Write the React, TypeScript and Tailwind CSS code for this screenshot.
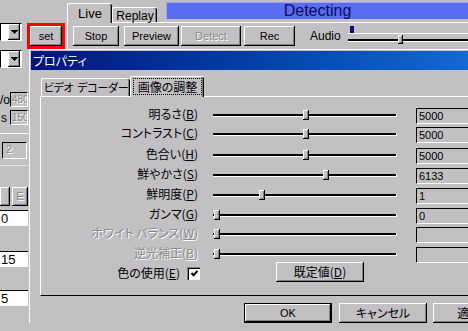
import type { ReactNode } from "react";

const BG = "bg-[#c2c0c3]";
const RAISED =
  "shadow-[inset_-1px_-1px_0_#000,inset_1px_1px_0_#fff,inset_-2px_-2px_0_#808080]";
const FIELD = "border-l border-t border-l-black border-t-black border-r border-b border-r-white border-b-white";
const JP = "font-['Noto_Sans_CJK_JP',sans-serif] [font-feature-settings:'palt']";
const DIM = "text-[#8a888c] [text-shadow:1px_1px_0_#fff]";

type Row = {
  label: string;
  hotkey: string;
  value: string;
  pos: number;
  h: string;
  disabled?: boolean;
};

const rows: Row[] = [
  { label: "明るさ", hotkey: "B", value: "5000", pos: 90, h: "h-[19px]" },
  { label: "コントラスト", hotkey: "C", value: "5000", pos: 90, h: "h-[21px]" },
  { label: "色合い", hotkey: "H", value: "5000", pos: 90, h: "h-[20px]" },
  { label: "鮮やかさ", hotkey: "S", value: "6133", pos: 110, h: "h-[20px]" },
  { label: "鮮明度", hotkey: "P", value: "1", pos: 46, h: "h-[20px]" },
  { label: "ガンマ", hotkey: "G", value: "0", pos: 1, h: "h-[19px]" },
  { label: "ホワイト バランス", hotkey: "W", value: "", pos: 1, h: "h-[20px]", disabled: true },
  { label: "逆光補正", hotkey: "B", value: "", pos: 1, h: "h-[17px]", disabled: true },
];

function Arrow() {
  return (
    <svg width="7" height="4" viewBox="0 0 7 4" shapeRendering="crispEdges">
      <path d="M0 0h7v1h-1v1h-1v1h-1v1h-1v-1h-1v-1h-1v-1h-1z" fill="#000" />
    </svg>
  );
}

function Combo() {
  return (
    <div className={`flex h-[18px] w-[22px] bg-white ${FIELD} pr-px`}>
      <div className="flex-1" />
      <div className={`flex w-[12px] items-center justify-center ${BG} ${RAISED}`}>
        <Arrow />
      </div>
    </div>
  );
}

function Btn({
  children,
  className = "",
  disabled,
}: {
  children: ReactNode;
  className?: string;
  disabled?: boolean;
}) {
  return (
    <div
      className={`flex h-[20px] shrink-0 items-center justify-center whitespace-nowrap ${BG} ${RAISED} ${
        disabled ? DIM : "text-black"
      } ${className}`}
    >
      {children}
    </div>
  );
}

function Slider({ pos }: { pos: number }) {
  return (
    <div className="relative h-[3px] w-[184px] border-b border-r border-white bg-black">
      <div
        className={`absolute top-[-4px] h-[10px] w-[6px] ${BG} ${RAISED}`}
        style={{ left: pos }}
      />
    </div>
  );
}

function LeftColumn() {
  return (
    <div className="w-[29px] shrink-0 pr-px">
      <div className="mt-px">
        <Combo />
      </div>
      <div className="mt-[24px] flex h-[15px] items-center">
        <span className="w-[10px] text-[12px]">/o</span>
        <div className={`h-[15px] flex-1 overflow-hidden pl-px text-[10px] leading-[13px] ${FIELD} ${DIM}`}>480</div>
      </div>
      <div className="mt-[3px] flex h-[15px] items-center">
        <span className="w-[10px] pl-px text-[12px]">s</span>
        <div className={`h-[15px] flex-1 overflow-hidden pl-px text-[10px] leading-[13px] ${FIELD} ${DIM}`}>150</div>
      </div>
      <div className="mt-[8px] h-px bg-white" />
      <div className={`ml-[2px] mr-px mt-[8px] h-[17px] pl-[3px] pt-px ${FIELD} ${DIM}`}>2</div>
      <div className="mt-[6px] h-px bg-[#e6e4e8]" />
      <div className="mt-[21px] flex h-[19px] gap-[2px]">
        <div className={`w-[10px] ${BG} ${RAISED}`} />
        <div className={`flex flex-1 items-center justify-center ${BG} ${RAISED} ${DIM}`}>E</div>
      </div>
      <div className="mt-[4px] h-[16px] border-t border-black bg-white pl-px text-[13px] leading-[15px]">0</div>
      <div className="mt-[25px] h-[16px] border-t border-black bg-white pl-px text-[13px] leading-[15px]">15</div>
      <div className="mt-[23px] h-[16px] border-t border-black bg-white pl-px text-[13px] leading-[15px]">5</div>
    </div>
  );
}

function PictureTab() {
  return (
    <div className="h-[199px] border-b border-l border-b-black border-l-white pt-[9px]">
      {rows.map((row) => (
        <div key={row.label} className={`flex items-start ${row.h}`}>
          <div
            className={`w-[157px] text-right text-[12px] leading-[16px] ${JP} ${
              row.disabled ? DIM : "text-black"
            }`}
          >
            {row.label}(<u>{row.hotkey}</u>)
          </div>
          <div className="ml-[15px] mt-[2px] flex h-[14px] items-center">
            <Slider pos={row.pos} />
          </div>
          <div className={`ml-[19px] mt-[2px] h-[16px] w-[60px] pl-[2px] leading-[15px] ${FIELD}`}>
            {row.value}
          </div>
        </div>
      ))}
      <div className="flex h-[20px] items-start">
        <div className="flex w-[159px] items-center justify-end gap-[7px] pt-[4px]">
          <span className={`text-[12px] leading-[14px] ${JP}`}>
            色の使用(<u>E</u>)
          </span>
          <div className="flex h-[13px] w-[13px] items-center justify-center border-l border-t border-[#808080] bg-white shadow-[inset_1px_1px_0_#000]">
            <svg width="9" height="9" viewBox="0 0 9 9">
              <path d="M1.5 4l2 2.2L7.5 1.8" fill="none" stroke="#000" strokeWidth="2" />
            </svg>
          </div>
        </div>
        <Btn className={`ml-[76px] h-[19px] w-[88px] text-[12px] ${JP}`}>
          既定値(<u>D</u>)
        </Btn>
      </div>
    </div>
  );
}

function PropertyDialog() {
  return (
    <div className="w-[480px] shrink-0 border-l border-t border-white pl-px pt-px">
      <div
        className={`flex h-[19px] items-center bg-gradient-to-r from-[#04127c] to-[#1870dc] pl-[2px] text-[12px] text-white ${JP}`}
      >
        プロパティ
      </div>
      <div className="pl-[9px]">
        <div className={`mt-[4px] flex h-[23px] items-end border-b border-white pl-px text-[12px] ${JP}`}>
          <div className="flex h-[18px] w-[89px] shrink-0 items-center justify-center whitespace-nowrap rounded-t-[2px] border-l border-t border-white text-[11px] tracking-[-0.3px] shadow-[inset_-1px_0_0_#000,inset_-2px_0_0_#808080]">
            <span>ビデオ</span>
            <span className="ml-[4px]">デコーダー</span>
          </div>
          <div className={`-mb-px flex h-[21px] w-[74px] shrink-0 items-center justify-center rounded-t-[2px] border-l border-t border-white ${BG} px-[2px] pb-[2px] pt-px shadow-[inset_-1px_0_0_#000,inset_-2px_0_0_#808080]`}>
            <span className="flex h-full w-full items-center justify-center border border-dotted border-black">
              画像の調整
            </span>
          </div>
        </div>
        <PictureTab />
        <div className="mt-[7px] flex">
          <div className="ml-[204px] flex h-[20px] w-[88px] shrink-0 border border-black">
            <Btn className="h-full w-full">OK</Btn>
          </div>
          <Btn className={`ml-[7px] w-[88px] text-[12px] ${JP}`}>キャンセル</Btn>
          <Btn className={`ml-[6px] w-[88px] text-[12px] ${JP}`}>適用(A)</Btn>
        </div>
      </div>
    </div>
  );
}

export default function App() {
  return (
    <div
      className={`h-[331px] w-[468px] overflow-hidden ${BG} font-['Liberation_Sans',sans-serif] text-[11px] leading-none text-black`}
    >
      <div className="flex h-[49px]">
        <div className="w-[27px] shrink-0 pt-[23px]">
          <Combo />
        </div>
        <div className="mt-[23px] h-[26px] w-[38px] shrink-0 border-[3px] border-[#ff0000]">
          <Btn className="h-full w-full">set</Btn>
        </div>
        <div className="ml-[2px] flex-1">
          <div className="flex h-[23px] items-end border-b border-white text-[12px]">
            <div className={`-mb-px flex h-[20px] w-[45px] items-center justify-center rounded-t-[2px] border-l border-t border-white ${BG} text-[13px] shadow-[inset_-1px_0_0_#000,inset_-2px_0_0_#808080]`}>
              Live
            </div>
            <div className="flex h-[15px] w-[45px] items-center justify-center rounded-t-[2px] border-l border-t border-white pt-px text-[12px] shadow-[inset_-1px_0_0_#000,inset_-2px_0_0_#808080]">
              Replay
            </div>
            <div className="mb-[3px] ml-[9px] flex h-[17px] flex-1 items-end justify-center overflow-hidden border-l border-t border-[#9aa6f8] bg-[#5a6cf2] text-[16px] leading-[16px] text-[#0c0c5c]">
              Detecting
            </div>
          </div>
          <div className="flex h-[26px] items-start border-l border-white pl-[5px] pt-[3px]">
            <Btn className="w-[46px]">Stop</Btn>
            <Btn className="ml-[5px] w-[55px]">Preview</Btn>
            <Btn className="ml-[2px] w-[60px]" disabled>
              Detect
            </Btn>
            <Btn className="ml-[3px] w-[51px]">Rec</Btn>
            <span className="ml-[15px] mt-[4px] text-[12px]">Audio</span>
            <div className="-mt-px ml-[7px] flex-1">
              <div className="h-[9px] border-b border-white pl-[2px] pt-px">
                <div className="h-[7px] w-[4px] bg-[#0a0a70]" />
              </div>
              <div className="relative mt-[5px] h-[3px] border-b border-white bg-black">
                <div className={`absolute top-[-4px] h-[9px] w-[5px] ${BG} ${RAISED}`} style={{ left: 50 }} />
              </div>
            </div>
          </div>
        </div>
      </div>
      <div className="flex">
        <LeftColumn />
        <PropertyDialog />
      </div>
    </div>
  );
}
